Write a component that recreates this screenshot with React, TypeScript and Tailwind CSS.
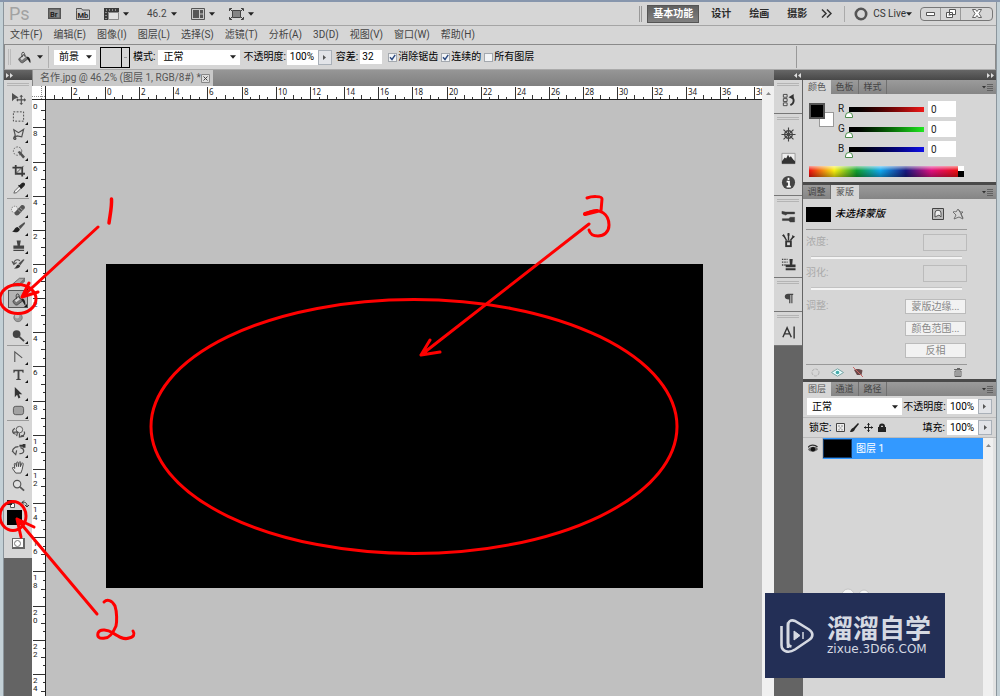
import React from 'react';

const MENUS = ['文件(F)', '编辑(E)', '图像(I)', '图层(L)', '选择(S)', '滤镜(T)', '分析(A)', '3D(D)', '视图(V)', '窗口(W)', '帮助(H)'];

/* ---------- small shared parts ---------- */

const Caret: React.FC<{ className?: string }> = ({ className = '' }) => (
  <svg className={`h-1 w-[6px] shrink-0 ${className}`} viewBox="0 0 7 4">
    <path d="M0 0h7L3.500 4z" fill="#222" />
  </svg>
);

const Grip: React.FC = () => (
  <div className="h-[3px] w-[22px] border-y border-[#b4b4b4]" />
);

const Select: React.FC<{ label: string; value: string; className: string }> = ({ label, value, className }) => (
  <div className={`relative ${className}`}>
    <select aria-label={label} className="h-full w-full appearance-none bg-white pl-[5px] text-black outline-none">
      <option>{value}</option>
    </select>
    <Caret className="pointer-events-none absolute right-1 top-1/2 -translate-y-1/2" />
  </div>
);

const Check: React.FC<{ label: string; checked?: boolean }> = ({ label, checked }) => (
  <label className="flex items-center gap-px">
    <span className="relative flex">
      <input type="checkbox" defaultChecked={checked} className="peer size-[9px] appearance-none border border-[#a3a8ae] bg-[#f2f4f6]" />
      <svg className="pointer-events-none invisible absolute inset-0 size-[9px] peer-checked:visible" viewBox="0 0 9 9">
        <path d="M2 4.200l2 2.300L7.200 1.800" fill="none" stroke="#2c4a80" strokeWidth="1.400" />
      </svg>
    </span>
    {label}
  </label>
);

const Percent: React.FC<{ id: string }> = ({ id }) => (
  <div className="flex h-[15px]">
    <input id={id} defaultValue="100%" className="w-[31px] bg-white px-[3px] text-black outline-none" />
    <button aria-label="展开" className="flex w-[14px] items-center justify-center border border-[#a9b0b8] bg-[#e2e4e8]">
      <svg className="h-[5px] w-[3px]" viewBox="0 0 3 5"><path d="M0 0l3 2.500L0 5z" fill="#555" /></svg>
    </button>
  </div>
);

const PanelTabs: React.FC<{ tabs: string[]; active: number }> = ({ tabs, active }) => (
  <div className="flex h-[14px] shrink-0 bg-linear-to-b from-[#9b9b9b] to-[#858585]">
    {tabs.map((t, i) => (
      <button
        key={t}
        className={
          i === active
            ? 'w-7 bg-[#d6d6d6] text-[9px] leading-[14px] text-[#555]'
            : 'w-7 border-r border-[#707070] text-[9px] leading-[14px] text-[#444]'
        }
      >
        {t}
      </button>
    ))}
    <button aria-label="面板菜单" className="ml-auto mr-[3px] flex items-center">
      <svg className="h-[7px] w-[11px]" viewBox="0 0 11 7">
        <path d="M0 2h4L2 4.500z" fill="#333" />
        <path d="M5 .5h6M5 2.500h6M5 4.500h6M5 6.500h6" stroke="#555" strokeWidth=".8" />
      </svg>
    </button>
  </div>
);

/* ---------- title bar, menu, options ---------- */

const TitleBar: React.FC = () => (
  <div className="flex h-6 shrink-0 items-center border-b border-[#a5a5a5] pl-[5px] pr-[3px]">
    <span className="w-[39px] text-[18px] leading-6 text-[#a2a2a2]">Ps</span>
    <button aria-label="Bridge" className="mr-[15px]">
      <svg className="h-[11px] w-[13px]" viewBox="0 0 13 11">
        <path d="M0 0h13v11H0z" fill="#555" />
        <path d="M1.500 1.500h10v8h-10z" fill="#8d8d8d" />
        <text x="2" y="8.500" fontSize="7.500" fontWeight="700" fill="#222">Br</text>
      </svg>
    </button>
    <button aria-label="Mini Bridge" className="mr-[14px]">
      <svg className="h-3 w-[14px]" viewBox="0 0 14 12">
        <path d="M.5 2.500V.5h5l1 1.500h7v9.500H.5z" fill="#c8c8c8" stroke="#555" />
        <text x="1.500" y="9.500" fontSize="7.500" fontWeight="700" fill="#222">Mb</text>
      </svg>
    </button>
    <button className="mr-[18px] flex items-center gap-1" aria-label="查看额外内容">
      <svg className="h-3 w-[15px]" viewBox="0 0 15 12">
        <path d="M0 0h15v4H4v8H0z" fill="#3b3b3b" />
        <path d="M4.500 4.500h10v7h-10z" fill="#e2e2e2" stroke="#777" strokeWidth=".8" />
        <path d="M2 2h12M2 4v8" stroke="#ddd" strokeDasharray="1 2" />
      </svg>
      <Caret />
    </button>
    <button className="mr-[14px] flex items-center gap-1 text-[#444]">46.2<Caret /></button>
    <button className="mr-[14px] flex items-center gap-1" aria-label="排列文档">
      <svg className="h-3 w-[14px]" viewBox="0 0 14 12">
        <path d="M.5.5h13v11H.5z" fill="#c8c8c8" stroke="#555" />
        <path d="M2 2h6v8H2zM9 2h3v3.500H9zM9 6.500h3V10H9z" fill="#555" />
      </svg>
      <Caret />
    </button>
    <button className="flex items-center gap-1" aria-label="屏幕模式">
      <svg className="h-3 w-[15px]" viewBox="0 0 15 12">
        <path d="M3.500 2.500h8v7h-8z" fill="#858585" stroke="#444" />
        <path d="M.5 3V.5H3M12 .5h2.500V3M.5 9v2.500H3M12 11.500h2.500V9M1 1l2 2M14 1l-2 2M1 11l2-2M14 11l-2-2" fill="none" stroke="#444" />
      </svg>
      <Caret />
    </button>

    <div className="ml-auto flex items-center font-bold text-[#2c2c2c]">
      <div className="mr-[5px] h-4 w-[3px] border-x border-[#999]" />
      <button className="mr-3 h-[18px] w-[52px] border border-[#555] bg-linear-to-b from-[#606060] to-[#808080] text-white">基本功能</button>
      <button className="mr-[18px]">设计</button>
      <button className="mr-[18px]">绘画</button>
      <button className="mr-[14px]">摄影</button>
      <button aria-label="更多" className="mr-3">
        <svg className="h-[9px] w-[11px]" viewBox="0 0 11 9"><path d="M1 .5l4 4-4 4M6 .5l4 4-4 4" fill="none" stroke="#333" strokeWidth="1.500" /></svg>
      </button>
      <div className="mr-[9px] h-4 w-px bg-[#aaa]" />
      <button className="mr-2 flex items-center gap-[5px] font-normal text-[#333]">
        <svg className="size-[14px]" viewBox="0 0 14 14"><circle cx="7" cy="7" r="5.200" fill="none" stroke="#555" strokeWidth="2.600" /></svg>
        <span className="flex items-center">CS Live<Caret /></span>
      </button>
      <div className="flex h-[14px] w-[73px] rounded-sm border border-[#777]">
        <button aria-label="最小化" className="flex w-5 items-center justify-center border-r border-[#999]">
          <svg className="h-1 w-[9px]" viewBox="0 0 9 4"><path d="M.5.500h8v3h-8z" fill="#fff" stroke="#555" /></svg>
        </button>
        <button aria-label="还原" className="flex w-5 items-center justify-center border-r border-[#999]">
          <svg className="h-[9px] w-[10px]" viewBox="0 0 10 9"><path d="M3.500.5h6v5h-6zM.5 3.500h6v5h-6z" fill="#fff" stroke="#555" /><path d="M2.500 5.500h2v1h-2z" fill="#444" /></svg>
        </button>
        <button aria-label="关闭" className="flex grow items-center justify-center">
          <svg className="h-[9px] w-[10px]" viewBox="0 0 10 9"><path d="M.5.5h3L5 2.500 6.500.5h3L7 4.500l2.500 4h-3L5 6.500 3.500 8.500h-3L3 4.500z" fill="#fff" stroke="#555" strokeWidth=".9" /></svg>
        </button>
      </div>
    </div>
  </div>
);

const OptionsBar: React.FC = () => (
  <div className="flex h-[26px] shrink-0 items-center border border-[#8a8a8a] border-b-[#aaa] pl-[3px] text-black">
    <div className="mr-[6px] h-4 w-[3px] border-x border-[#bbb]" />
    <button aria-label="油漆桶工具" className="mr-[5px] flex items-center gap-[6px]">
      <svg className="h-[13px] w-[14px]" viewBox="0 0 16 14"><Bucket /></svg>
      <Caret />
    </button>
    <div className="mr-[5px] h-[22px] w-px bg-[#b0b0b0]" />
    <Select label="填充源" value="前景" className="mr-1 h-[15px] w-[42px]" />
    <button aria-label="图案" className="mr-[3px] flex h-[21px] w-[30px] border border-black">
      <span className="h-full w-[21px] border-r border-black" />
      <span className="m-auto h-px w-[3px] bg-[#999]" />
    </button>
    <span className="mr-[3px]">模式:</span>
    <Select label="模式" value="正常" className="mr-[3px] h-[15px] w-[82px]" />
    <label htmlFor="opacity" className="mr-px">不透明度:</label>
    <Percent id="opacity" />
    <label htmlFor="tolerance" className="ml-1 mr-0.5">容差:</label>
    <input id="tolerance" defaultValue="32" className="mr-[6px] h-[14px] w-[22px] bg-white px-0.5 outline-none" />
    <div className="flex gap-[3px]">
      <Check label="消除锯齿" checked />
      <Check label="连续的" checked />
      <Check label="所有图层" />
    </div>
    <div className="ml-auto mr-[198px] h-[22px] w-px bg-[#999]" />
  </div>
);

/* ---------- tools ---------- */

function Bucket() {
  return (
    <>
      <path d="M2 8.500L8 3.500l4.500 5-6 4.500c-2 .5-4.500-2.500-4.500-4.500z" fill="#777" stroke="#4a4a4a" />
      <path d="M4 8l4-3.500 2 2L5.500 10z" fill="#d8d8d8" />
      <path d="M6 6.500C5 3 5.500 1 7 1s2 2 2 5" fill="none" stroke="#3a3a3a" />
      <path d="M11 6c3 0 4.500 2 4.500 7-1.500 0-2-3-4-5z" fill="#222" />
    </>
  );
}

type Tool = { name: string; art: React.ReactNode; menu?: boolean };

const S = '#505050';

const TOOLS: (Tool | null)[] = [
  { name: '移动', art: <><path d="M1 1v9l2.500-2.500L8 6z" fill={S} /><path d="M11 4v9M6.500 8.500h9" stroke={S} strokeWidth="1.200" /><path d="M11 3l2 2H9zM11 14l2-2H9zM5.500 8.500l2-2v4zM16 8.500l-2-2v4z" fill={S} /></> },
  { name: '矩形选框', menu: true, art: <path d="M2.500 2h11v10h-11z" fill="none" stroke="#444" strokeDasharray="2 1.500" /> },
  { name: '多边形套索', menu: true, art: <path d="M3 2l5 3 5.500-3.500-2 8-5-1L3 10.500c-1 .8 1 2.500 2 1.500S3.500 9.500 3 10L4.500 8z" fill="none" stroke={S} strokeWidth="1.300" /> },
  { name: '快速选择', menu: true, art: <><circle cx="7" cy="5.500" r="4.500" fill="none" stroke="#666" strokeDasharray="2 1.200" /><path d="M7 6.500l2.500-1L15 11.500l-2 2z" fill={S} /></> },
  { name: '裁剪', menu: true, art: <><path d="M5 1v9.500h10M1.500 4H12v9.500" fill="none" stroke="#3c3c3c" strokeWidth="1.900" /><path d="M5 10.500L13.500 2" stroke={S} /></> },
  { name: '吸管', menu: true, art: <><path d="M3 12l1-2.500 5-5 2 2-5 5z" fill="#eee" stroke={S} strokeWidth=".9" /><path d="M8 3.500L11.500 7M9.500 4l2.500-2.500c1.500-1 3 .5 2 2L11.500 6z" fill="#222" stroke="#222" strokeWidth="1.300" /></> },
  null,
  { name: '污点修复', menu: true, art: <><circle cx="4" cy="7" r="3.500" fill="#e8e8e8" stroke="#777" strokeDasharray="1.500 1" /><path d="M4 10L11 2.500c2-1.500 5 1 3.500 3.500L8 13c-2.500 1.500-5-.5-4-3z" fill="#555" /><path d="M7.500 7l3 3M9.500 5l3 3" stroke="#aaa" /></> },
  { name: '画笔', menu: true, art: <><path d="M8 6l6.500-5 .5 2-5 5.500z" fill={S} /><path d="M1 11c3 0 2.500-4.500 6-4.500l2.500 2C9 12.500 4 13 1 11z" fill="#222" /></> },
  { name: '仿制图章', menu: true, art: <path d="M6 1.500h4.500L9.500 7h4.500v3.500H2.500V7H7zM2.500 11.500H14v1.500H2.500z" fill="#444" /> },
  { name: '历史记录画笔', menu: true, art: <><path d="M8 7l5-4.500 1.500.5L10 9z" fill={S} /><path d="M3 12c2.500 0 2.500-4 5-4l2 1.500C9 12.500 5.500 13 3 12z" fill="#333" /><path d="M3 7c0-4 4-5 6.500-3M1 4.500L3 8l3-2" fill="none" stroke="#555" strokeWidth="1.300" /></> },
  { name: '橡皮擦', menu: true, art: <><path d="M2 9.500L9 3.500h6l-6 6z" fill="#aaa" stroke="#555" strokeWidth=".8" /><path d="M2 9.500h7l6-6v3.500l-6 5.500H2z" fill="#777" /></> },
  { name: '油漆桶', menu: true, art: <Bucket /> },
  { name: '模糊', menu: true, art: <><circle cx="7.500" cy="7" r="4.500" fill="#999" stroke="#777" /><circle cx="6.500" cy="5.500" r="2.500" fill="#c4c4c4" /></> },
  { name: '减淡', menu: true, art: <><circle cx="6" cy="5.500" r="4.200" fill="#444" /><path d="M9 8.500l5 4.500" stroke="#444" strokeWidth="2" /></> },
  null,
  { name: '钢笔', menu: true, art: <path d="M4 13V2l8 6.500" fill="none" stroke="#555" strokeWidth="1.200" /> },
  { name: '文字', menu: true, art: <path d="M2.500 2h11v3h-1l-.7-1.600H9v8.200l1.500.4v1h-5v-1L7 11.600V3.400H4.200L3.500 5h-1z" fill="#444" /> },
  { name: '路径选择', menu: true, art: <path d="M4 1v11l2.500-2.500 1.500 4 2-1-1.500-3.500H12z" fill="#333" /> },
  { name: '圆角矩形', menu: true, art: <rect x="2.500" y="2.500" width="11" height="9" rx="2.500" fill="#a2a2a2" stroke="#555" /> },
  null,
  { name: '3D 旋转', menu: true, art: <><circle cx="9" cy="5" r="3.500" fill="#ddd" stroke="#555" /><path d="M4 3.500C.5 6 1 9 5 10M14 7c1.500 2 0 5-3.500 4.500M2 8l5-.5L6 12M9 9v4l5-1" fill="none" stroke={S} strokeWidth="1.300" /></> },
  { name: '3D 相机', menu: true, art: <><path d="M9 2h3.500v-1h3v4h-3V4H9z" fill="#333" /><path d="M8 4C3 4 0 8 3 10.500M10 5c5 1 5 7-1 6.500M1 8.500l4 4 1-4.500" fill="none" stroke={S} strokeWidth="1.300" /></> },
  { name: '抓手', menu: true, art: <path d="M5 13L1.500 8c-.5-1.300 1-1.500 2.500 0L3.500 3.500c0-1.300 1.400-1.300 1.600 0L6 6V2c0-1.300 1.600-1.300 1.700 0L8 6l.8-4.500c.3-1.200 1.700-1 1.600.3L10 6.200l1.500-3.500c.5-1 1.900-.6 1.600.6L12 9l-1.500 4z" fill="#e6e6e6" stroke="#444" /> },
  { name: '缩放', art: <><circle cx="6.500" cy="5.500" r="4" fill="#e0e0e0" stroke="#555" strokeWidth="1.200" /><path d="M9.500 8.500l4.500 4" stroke="#555" strokeWidth="2" /></> },
];

const Toolbox: React.FC = () => (
  <div className="flex w-7 shrink-0 flex-col bg-[#646464]">
    <div className="h-[10px] bg-linear-to-b from-[#666] to-[#484848] pl-0.5 pt-[3px]">
      <svg className="h-[5px] w-[7px]" viewBox="0 0 7 5"><path d="M0 0l3 2.500L0 5zM4 0l3 2.500L4 5z" fill="#ddd" /></svg>
    </div>
    <div className="flex flex-col items-center bg-[#d6d6d6] pb-[9px]">
      <div className="flex h-[9px] items-center"><Grip /></div>
      {TOOLS.map((tool, i) =>
        tool === null ? (
          <div key={i} className="my-px h-px w-[22px] bg-[#9a9a9a]" />
        ) : (
          <button
            key={i}
            aria-label={tool.name}
            className={
              tool.name === '油漆桶'
                ? 'relative flex h-[18px] w-5 items-center justify-center border border-[#555] bg-[#b4b4b4]'
                : 'relative flex h-[18px] w-5 items-center justify-center'
            }
          >
            <svg className="h-[13px] w-[15px]" viewBox="0 0 16 14">{tool.art}</svg>
            {tool.menu && (
              <svg className="absolute bottom-0 right-0 size-[3px]" viewBox="0 0 3 3"><path d="M3 0v3H0z" fill="#111" /></svg>
            )}
          </button>
        ),
      )}
      <div className="flex h-4 w-[22px] items-center justify-between pt-1">
        <svg className="size-[8px]" viewBox="0 0 8 8"><path d="M3.500 3.500h4v4h-4z" fill="#fff" stroke="#555" /><path d="M0 0h5v5H0z" fill="#222" /></svg>
        <svg className="size-[8px]" viewBox="0 0 8 8"><path d="M1 2.500c4-1 5 1 5 4M3 .5l-2 2 2 2M4 5l2 2 2-2" fill="none" stroke="#333" /></svg>
      </div>
      <div className="flex w-[22px] pb-[13px]">
        <button aria-label="前景色" className="size-[15px] bg-black" />
      </div>
      <button aria-label="快速蒙版" className="flex h-[11px] w-[13px] items-center justify-center border border-b-2 border-r-2 border-[#666] bg-white">
        <span className="size-[7px] rounded-full border border-[#777]" />
      </button>
    </div>
  </div>
);

/* ---------- document area ---------- */

const PER_UNIT = 17.08; // screen pixels for one ruler unit
const marks = (from: number, to: number) =>
  Array.from({ length: (to - from) * 2 + 1 }, (_, i) => from + i / 2);

const tickLength = (n: number) => (n % 2 === 0 ? 13 : n % 1 === 0 ? 5 : 3);

const TopRuler: React.FC = () => (
  <svg className="h-[14px] min-w-0 grow bg-white font-['Noto_Sans',sans-serif]" aria-label="水平标尺">
    {marks(-3, 38.5).map((n) => {
      const x = Math.round(60 + n * PER_UNIT) - 0.5;
      return (
        <g key={n}>
          <path d={`M${x} 14V${14 - tickLength(n)}`} stroke="#333" />
          {n % 2 === 0 && <text x={x + 1.500} y="9" fontSize="8" fill="#222">{Math.abs(n)}</text>}
        </g>
      );
    })}
    <path d="M0 13.500h4000" stroke="#222" />
  </svg>
);

const SideRuler: React.FC = () => (
  <svg className="w-[14px] shrink-0 bg-white" aria-label="垂直标尺">
    {marks(-9, 25).map((n) => {
      const y = Math.round(164 + n * PER_UNIT) + 0.5;
      return (
        <g key={n}>
          <path d={`M14 ${y}H${14 - tickLength(n)}`} stroke="#333" />
          {n % 2 === 0 &&
            String(Math.abs(n)).split('').map((d, i) => (
              <text key={i} x="1" y={y + 8 + i * 8} fontSize="8" fill="#222">{d}</text>
            ))}
        </g>
      );
    })}
    <text x="1" y="9" fontSize="8" fill="#222">0</text>
    <path d="M13.500 0v4000" stroke="#222" />
  </svg>
);

const DocumentArea: React.FC = () => (
  <main className="flex min-w-0 grow flex-col">
    <div className="flex h-4 shrink-0 bg-linear-to-b from-[#969696] to-[#808080]">
      <div className="ml-px flex w-[180px] items-center justify-between bg-[#c9c9c9] pl-[7px] pr-1 text-[#555]">
        <span className="whitespace-nowrap">名作.jpg @ 46.2% (图层 1, RGB/8#) *</span>
        <button aria-label="关闭文档">
          <svg className="size-[9px]" viewBox="0 0 9 9"><path d="M.5.5h8v8h-8z" fill="#ddd" stroke="#888" /><path d="M2.500 2.500l4 4M6.500 2.500l-4 4" stroke="#444" /></svg>
        </button>
      </div>
    </div>
    <div className="flex min-h-0 grow">
      <div className="flex min-w-0 grow flex-col">
        <div className="flex shrink-0">
          <svg className="h-[14px] w-[14px] bg-white" viewBox="0 0 14 14">
            <path d="M0 10.500h14M9.500 0v14" stroke="#888" strokeDasharray="1 1" />
            <path d="M0 13.500h14M13.500 0v14" stroke="#222" />
          </svg>
          <TopRuler />
        </div>
        <div className="flex min-h-0 grow">
          <SideRuler />
          <div className="relative grow overflow-hidden bg-[#c0c0c0]">
            <div className="absolute left-[60px] top-[164px] h-[324px] w-[597px] bg-black" />
          </div>
        </div>
      </div>
      <div className="flex w-3 shrink-0 justify-center bg-[#f0f0f0] pt-[6px]">
        <svg className="h-[3px] w-[5px]" viewBox="0 0 5 3"><path d="M0 3h5L2.500 0z" fill="#888" /></svg>
      </div>
    </div>
  </main>
);

/* ---------- collapsed panels ---------- */

const STRIP: Tool[][] = [
  [{ name: '历史记录', art: <><path d="M2.500 1.500h4v3h-4zM2.500 6h4v3h-4zM2.500 10.500h4v3h-4z" fill="#ddd" stroke="#444" /><path d="M10 13c4.500-2 4.500-7 1-9" fill="none" stroke="#333" strokeWidth="2" /><path d="M8 4.500L13.500 1v6z" fill="#333" /></> }],
  [
    { name: '导航器', art: <><circle cx="8" cy="8" r="4" fill="none" stroke="#444" strokeWidth="1.500" /><path d="M8 .5v15M.5 8h15M2.700 2.700l10.600 10.600M13.300 2.700L2.700 13.300" stroke="#444" strokeWidth="1.200" /></> },
    { name: '直方图', art: <><path d="M1 2.500h14v11H1z" fill="#eee" stroke="#999" /><path d="M1 13.500V11l3-4 1.500 1 2-4 1.500 3 1.500-1.500L13 9l2 2v2.500z" fill="#333" /></> },
    { name: '信息', art: <><circle cx="8" cy="8" r="7" fill="#444" /><path d="M8 3v2.200M6 7h2.500v5M6 12.500h4.500" fill="none" stroke="#fff" strokeWidth="1.900" /></> },
  ],
  [
    { name: '画笔', art: <path d="M1 2.500l4 .8h9.500v1.900H7L5 6.500 1 5zM1.500 10.300H8l2-1.500h4.500v5H10l-2-1.500H1.500z" fill="#3c3c3c" stroke="#3c3c3c" strokeWidth=".5" /> },
    { name: '画笔预设', art: <><path d="M4.500 8h7v7h-7z" fill="#333" /><path d="M6.500 10h3v3h-3z" fill="#ddd" /><path d="M6 8L3 3M8 8V1M10 8l3-4" stroke="#333" strokeWidth="1.500" /><path d="M1 3l2-2 2 4zM12 2l3 2-3 2zM7 0h2v3H7z" fill="#333" /></> },
    { name: '仿制源', art: <><path d="M1 2.500h6M1 5.500h6M1 8.500h4" stroke="#444" strokeDasharray="1.500 1" strokeWidth="1.500" /><path d="M9 2h3.500L12 8h3.500v3H5V8h4.500zM5 12h10.500v2H5z" fill="#333" /></> },
  ],
  [{ name: '段落', art: <path d="M7.500 3H13v1.300h-.8V13H11V4.300h-1V13H8.700V9C5.500 9 4 7.700 4 6s1.500-3 3.500-3z" fill="#444" /> }],
  [{ name: '字符', art: <path d="M2 13L6.500 3 11 13M3.500 9.500h6M14 1.500v13" fill="none" stroke="#333" strokeWidth="1.500" /> }],
];

const IconStrip: React.FC = () => (
  <aside className="flex w-7 flex-col">
    {STRIP.map((group, i) => (
      <div key={i} className="flex flex-col items-center border-b border-[#777] bg-[#d6d6d6]">
        <div className="flex h-[9px] items-center"><Grip /></div>
        {group.map((p) => (
          <button key={p.name} aria-label={p.name} className="flex h-6 items-center pb-0.5">
            <svg className="size-[15px]" viewBox="0 0 16 16">{p.art}</svg>
          </button>
        ))}
      </div>
    ))}
  </aside>
);

/* ---------- right panels ---------- */

const CHANNELS = [
  { name: 'R', bar: 'bg-linear-to-r from-black to-[#f01818]' },
  { name: 'G', bar: 'bg-linear-to-r from-black to-[#20e820]' },
  { name: 'B', bar: 'bg-linear-to-r from-black to-[#1010e8]' },
];

const THUMB =
  'h-[5px] w-[75px] appearance-none [&::-webkit-slider-thumb]:-ml-1 [&::-webkit-slider-thumb]:mt-3 [&::-webkit-slider-thumb]:h-[6px] [&::-webkit-slider-thumb]:w-[8px] [&::-webkit-slider-thumb]:appearance-none [&::-webkit-slider-thumb]:rounded-t-full [&::-webkit-slider-thumb]:border [&::-webkit-slider-thumb]:border-[#4d8d4d] [&::-webkit-slider-thumb]:bg-white';

const ColorPanel: React.FC = () => (
  <section>
    <PanelTabs tabs={['颜色', '色板', '样式']} active={0} />
    <div className="bg-[#d6d6d6] px-[6px] pb-[5px] pt-[7px]">
      <div className="flex">
        <div className="relative mt-0.5 h-6 w-[29px]">
          <button aria-label="背景色" className="absolute bottom-0 left-[10px] size-[15px] border border-[#999] bg-white" />
          <button aria-label="前景色" className="absolute left-0 top-0 size-4 border-2 border-[#555] bg-black" />
        </div>
        <div className="flex flex-col gap-1">
          {CHANNELS.map((c) => (
            <label key={c.name} className="flex h-4 items-center text-[#222]">
              <span className="w-[11px]">{c.name}</span>
              <input type="range" min="0" max="255" defaultValue="0" aria-label={`${c.name} 滑块`} className={`${THUMB} ${c.bar}`} />
              <input aria-label={c.name} defaultValue="0" className="ml-1 h-4 w-7 bg-white px-[3px] outline-none" />
            </label>
          ))}
        </div>
      </div>
      <div className="mt-[9px] flex h-[11px] w-[155px]">
        <div className="grow bg-[linear-gradient(to_bottom,rgba(255,255,255,0.6),transparent_40%,rgba(0,0,0,0.3)),linear-gradient(to_right,#f01010,#f8f010_17%,#10a030_32%,#10a8f0_48%,#181880_65%,#e01080_82%,#f01010)]" />
        <div className="w-[6px] border-b-[6px] border-black bg-white" />
      </div>
    </div>
  </section>
);

const MaskField: React.FC<{ label: string }> = ({ label }) => (
  <div>
    <label className="flex h-[18px] items-center justify-between text-[#aaa]">
      <span>{label}:</span>
      <input disabled className="h-[17px] w-11 border border-[#bbb] bg-[#d8d8d8]" />
    </label>
    <div className="mx-[5px] mb-[5px] mt-[5px] h-[3px] border-t border-[#c2c2c2] bg-[#f4f4f4]" />
  </div>
);

const MaskPanel: React.FC = () => (
  <section>
    <PanelTabs tabs={['调整', '蒙版']} active={1} />
    <div className="bg-[#d6d6d6]">
      <div className="w-[164px] pl-[3px]">
        <div className="flex h-[31px] items-center border-b border-[#999]">
          <div className="mr-1 h-[15px] w-[25px] bg-black" />
          <span className="grow font-medium italic text-black">未选择蒙版</span>
          <button aria-label="添加像素蒙版" className="mr-2">
            <svg className="size-3" viewBox="0 0 12 12"><path d="M.5.5h11v11H.5z" fill="#bbb" stroke="#444" /><path d="M3 9V5a3 2.800 0 016 0v4l-2-2z" fill="#eee" stroke="#555" /></svg>
          </button>
          <button aria-label="添加矢量蒙版" className="mr-[3px]">
            <svg className="size-3" viewBox="0 0 12 12"><path d="M1 4c2-1 3 0 3 0l2-3 2 3 3 0-2 2 2 5-4-2-5 2 2-4zM7 2l4 8" fill="none" stroke="#666" strokeWidth=".9" /></svg>
          </button>
        </div>
        <div className="pt-[3px]">
          <MaskField label="浓度" />
          <MaskField label="羽化" />
        </div>
        <div className="flex justify-between pt-1 text-[#aaa]">
          <span>调整:</span>
          <div className="flex flex-col gap-[7px] pr-px">
            {['蒙版边缘...', '颜色范围...', '反相'].map((t) => (
              <button key={t} disabled className="h-[15px] w-[61px] border border-[#bbb] bg-[#f2f2f2] leading-3 text-[#888]">{t}</button>
            ))}
          </div>
        </div>
        <div className="mt-[6px] flex h-[15px] items-center border-t border-[#999] pl-[5px]">
          <button aria-label="载入选区" className="mr-[11px]"><svg className="size-[9px]" viewBox="0 0 9 9"><circle cx="4.500" cy="4.500" r="3.500" fill="none" stroke="#b0b0b0" strokeDasharray="3 1" /></svg></button>
          <button aria-label="应用蒙版" className="mr-[9px]"><svg className="h-[9px] w-[13px]" viewBox="0 0 13 9"><path d="M.5 4.500L6.500.8l6 3.700-6 3.700z" fill="#e8ffff" stroke="#7aa5a5" /><circle cx="6.500" cy="4.500" r="1.800" fill="#4aa" /></svg></button>
          <button aria-label="停用蒙版"><svg className="size-[10px]" viewBox="0 0 10 10"><path d="M1 3C3 1.500 7 1.500 9.500 3.500L8.500 8H4z" fill="#6a4a4a" /><path d="M0 0l10 10" stroke="#c66" /></svg></button>
          <button aria-label="删除蒙版" className="ml-auto mr-[5px]"><svg className="h-[9px] w-[8px]" viewBox="0 0 8 9"><path d="M1 3h6v5.500H1zM0 1.500h8M3 .5h3M3 4v4M5 4v4" fill="none" stroke="#666" /></svg></button>
        </div>
      </div>
    </div>
  </section>
);

const LayersPanel: React.FC = () => (
  <section className="flex min-h-0 grow flex-col">
    <PanelTabs tabs={['图层', '通道', '路径']} active={0} />
    <div className="flex min-h-0 grow flex-col bg-[#d6d6d6] text-black">
      <div className="flex items-center justify-between border-b border-[#bbb] py-0.5 pl-1 pr-1">
        <Select label="混合模式" value="正常" className="h-[17px] w-[95px]" />
        <label htmlFor="layer-opacity">不透明度:</label>
        <Percent id="layer-opacity" />
      </div>
      <div className="flex h-5 items-center border-b border-[#bbb] pl-[6px] pr-1">
        <span className="mr-[5px]">锁定:</span>
        <div className="flex items-center gap-[5px]">
          <button aria-label="锁定透明像素"><svg className="size-[9px]" viewBox="0 0 9 9"><path d="M.5.5h8v8h-8z" fill="#eee" stroke="#444" /><path d="M2 2h2v2H2zM5 2h2v2H5zM3.500 4h2v2h-2zM2 6h2v1.500H2zM5 6h2v1.500H5z" fill="#bbb" /></svg></button>
          <button aria-label="锁定图像像素"><svg className="size-[9px]" viewBox="0 0 9 9"><path d="M0 9c1-3 2-4 3-4L8 0l1 1-4 5C4 9 2 9 0 9z" fill="#222" /></svg></button>
          <button aria-label="锁定位置"><svg className="size-[9px]" viewBox="0 0 9 9"><path d="M4.500 0v9M0 4.500h9" stroke="#222" /><path d="M4.500 0l1.500 2H3zM4.500 9L3 7h3zM0 4.500L2 3v3zM9 4.500L7 6V3z" fill="#222" /></svg></button>
          <button aria-label="锁定全部"><svg className="h-[9px] w-[8px]" viewBox="0 0 8 9"><path d="M1 3.500a3 3 0 016 0V4h1v5H0V4h1z" fill="#222" /><path d="M2.800 4a1.200 1.500 0 012.400 0z" fill="#ccc" /></svg></button>
        </div>
        <label htmlFor="layer-fill" className="ml-auto mr-0.5">填充:</label>
        <Percent id="layer-fill" />
      </div>
      <div className="flex min-h-0 grow">
        <ul className="grow">
          <li className="flex h-[21px]">
            <button aria-label="可见性" className="flex w-5 items-center justify-center border-r border-[#bbb]">
              <svg className="h-[9px] w-[10px]" viewBox="0 0 10 9"><path d="M0 5.500C2 2 8 2 10 5 8 8.500 2 8.500 0 5.500z" fill="#666" /><circle cx="5" cy="5.200" r="2.200" fill="#111" /><path d="M0 3.500C2 .5 7 .5 9.500 3" fill="none" stroke="#333" strokeWidth="1.300" /></svg>
            </button>
            <div className="flex grow items-center gap-1 bg-[#3399ff] text-white">
              <span className="h-[19px] w-[29px] border border-[#143a66] bg-black" />
              图层 1
            </div>
          </li>
        </ul>
        <div className="flex w-[10px] justify-center bg-[#f0f0f0] pt-[6px]">
          <svg className="h-[3px] w-[5px]" viewBox="0 0 5 3"><path d="M0 3h5L2.500 0z" fill="#888" /></svg>
        </div>
        <div className="w-[3px] bg-[#e2e2e2]" />
      </div>
    </div>
  </section>
);

/* ---------- pen notes drawn over the window ---------- */

const Notes: React.FC = () => (
  <svg className="pointer-events-none absolute inset-0 h-full w-full" fill="none" stroke="#f00" strokeWidth="3" strokeLinecap="round" strokeLinejoin="round">
    <ellipse cx="18" cy="299" rx="18" ry="14.500" />
    <path d="M98 227L22 297M29 283L22 297L38 292" />
    <path d="M111.500 199C112 207 110 215 109 223" strokeWidth="3.500" />
    <ellipse cx="13" cy="516" rx="13" ry="14.500" />
    <path d="M97 614L17 519M34 527L17 519L21 537" />
    <path d="M104 602C107 599 112 600 115 606C117 612 117 622 116 626C113 633 110 638 105 638C99 639 97 637 98 633C100 628 108 630 113 633C119 637 124 640 129 638C134 637 135 634 133 631" />
    <ellipse cx="414" cy="426.500" rx="263" ry="127" />
    <path d="M589 224L421 355M430 340L421 355L440 352" />
    <path d="M587 198C592 196 602 196 602 199L601 211M585 214L590 212C600 208 609 214 609 225C609 232 604 236 598 236C593 236 590 234 589 230" />
    <path d="M585 214L597 211" strokeWidth="4" />
  </svg>
);

const Watermark: React.FC = () => (
  <div className="absolute bottom-[18px] right-[55px] flex h-[85px] w-[180px] items-center gap-[13px] bg-[#232f56] pl-[15px] text-[#d5d9e2]">
    <svg className="absolute bottom-full left-[76px] h-[5px] w-[30px]" viewBox="0 0 30 5" fill="#f4f4f4" stroke="#c4c4c4">
      <circle cx="7" cy="7" r="6" />
      <circle cx="23" cy="7" r="5" />
    </svg>
    <svg className="h-9 w-[34px] shrink-0" viewBox="0 0 34 36" fill="none" stroke="#d5d9e2">
      <path d="M8 30V7.500C8 3 11 1.500 15 3l14 8.500c4.500 3 4.500 7.500 0 10.500L15 31.500C8 36 1.500 33 1.500 27V8" strokeWidth="2.600" />
      <path d="M8 4.500V25c0 2 1 3 3.500 3.500" strokeWidth="2.600" />
      <path d="M14 13v9l6-4.500z" fill="#d5d9e2" strokeWidth="1" />
      <path d="M23 14v7" strokeWidth="1.500" />
    </svg>
    <div>
      <div className="text-[26px] font-bold leading-[26px]">溜溜自学</div>
      <div className="font-['DejaVu_Sans',sans-serif] text-[12px] leading-[14px]">zixue.3D66.COM</div>
    </div>
  </div>
);

const App: React.FC = () => (
  <div className="relative flex h-screen flex-col overflow-hidden bg-[#c3d0d6] font-['Roboto','Noto_Sans_CJK_SC',sans-serif] text-[10px] leading-[14px]">
    <div className="h-0.5 shrink-0 bg-[#8796ad]" />
    <div className="mx-[3px] flex min-h-0 grow flex-col border-x border-[#8b959c] bg-[#d6d6d6]">
      <TitleBar />
      <nav className="flex h-[18px] shrink-0 items-center gap-[11px] pl-[6px] text-[#444]">
        {MENUS.map((m) => (
          <button key={m}>{m}</button>
        ))}
      </nav>
      <OptionsBar />
      <div className="flex min-h-0 grow">
        <Toolbox />
        <DocumentArea />
        <div className="flex shrink-0 flex-col">
          <div className="flex h-[10px] shrink-0 items-center justify-between bg-linear-to-b from-[#666] to-[#484848] pl-5 pr-0.5">
            <svg className="h-[5px] w-[7px]" viewBox="0 0 7 5"><path d="M3 0L0 2.500 3 5zM7 0L4 2.500 7 5z" fill="#ddd" /></svg>
            <svg className="h-[5px] w-[7px]" viewBox="0 0 7 5"><path d="M0 0l3 2.500L0 5zM4 0l3 2.500L4 5z" fill="#ddd" /></svg>
          </div>
          <div className="flex min-h-0 grow gap-px bg-[#646464]">
            <IconStrip />
            <div className="flex w-[193px] flex-col gap-[3px] bg-[#4a4a4a]">
              <ColorPanel />
              <MaskPanel />
              <LayersPanel />
            </div>
          </div>
        </div>
      </div>
    </div>
    <Notes />
    <Watermark />
  </div>
);

export default App;
